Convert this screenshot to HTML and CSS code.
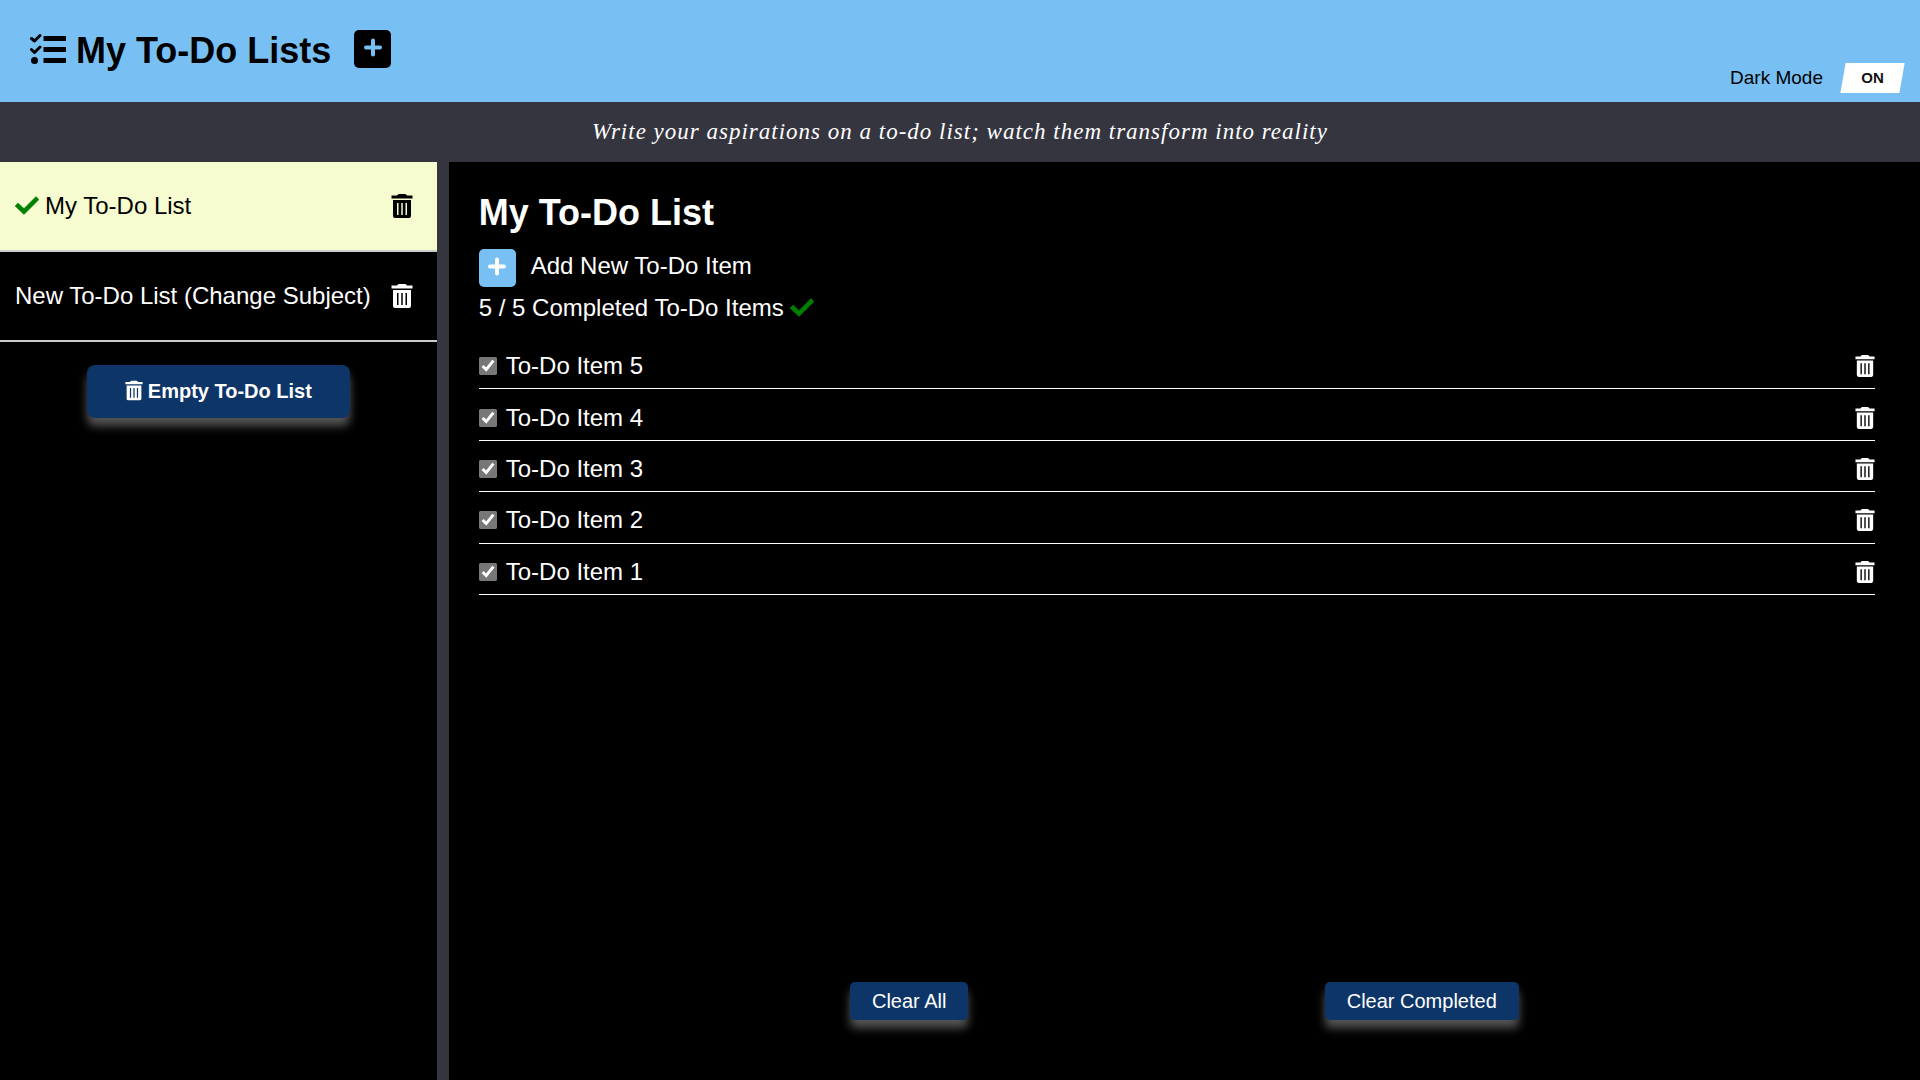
FILE: index.html
```html
<!DOCTYPE html>
<html lang="en">
<head>
<meta charset="utf-8">
<title>My To-Do Lists</title>
<link rel="stylesheet" href="styles.css">
</head>
<body>
<svg class="symbols" aria-hidden="true">
  <symbol id="trash" viewBox="0 0 22 24">
    <path d="M6 1.500 7.500 0h7L16 1.500h5.500V4.500H0.500V1.500zM2 6h18v16a2 2 0 0 1-2 2H4A2 2 0 0 1 2 22zM6 9v12h1.500V9zM10.250 9v12h1.500V9zM14.500 9v12h1.500V9z" fill="currentColor" fill-rule="evenodd"/>
  </symbol>
  <symbol id="check" viewBox="0 0 24 24">
    <path d="M0 12 3 9 9 14.500 21 2.500 24 5.500 9 20.500z" fill="currentColor" stroke="currentColor" stroke-width="0.500" stroke-linejoin="round"/>
  </symbol>
  <symbol id="plus" viewBox="0 0 20 20">
    <path d="M10 2.500v14M3 9.500h14" fill="none" stroke="currentColor" stroke-width="4" stroke-linecap="round"/>
  </symbol>
</svg>

<header class="header">
  <div class="brand">
    <svg class="icon-tasks" viewBox="0 0 36 32" aria-hidden="true">
      <path d="M1.500 5.500 4.500 8 10 2.500M1.500 16.500 4.500 19.500 10 14" fill="none" stroke="currentColor" stroke-width="3" stroke-linecap="round" stroke-linejoin="round"/>
      <circle cx="4.500" cy="27.500" r="3.500"/>
      <path d="M13.500 3h22.500v5H13.500zM13.500 14h22.500v5H13.500zM13.500 25h22.500v5H13.500z"/>
    </svg>
    <h1 class="title">My To-Do Lists</h1>
    <button class="add-button add-list" aria-label="Add list"><svg class="icon-plus"><use href="#plus"/></svg></button>
  </div>
  <div class="mode">
    <span id="mode-label">Dark Mode</span>
    <button class="toggle" aria-labelledby="mode-label"><span class="toggle-text">ON</span></button>
  </div>
</header>

<p class="quote">Write your aspirations on a to-do list; watch them transform into reality</p>

<div class="layout">
  <aside class="sidebar">
    <ul class="lists">
      <li class="list-row selected">
        <span class="list-name"><svg class="icon-check"><use href="#check"/></svg>My To-Do List</span>
        <button class="delete" aria-label="Delete list"><svg class="icon-trash"><use href="#trash"/></svg></button>
      </li>
      <li class="list-row">
        <span class="list-name">New To-Do List (Change Subject)</span>
        <button class="delete" aria-label="Delete list"><svg class="icon-trash"><use href="#trash"/></svg></button>
      </li>
    </ul>
    <button class="action empty"><svg class="icon-trash small"><use href="#trash"/></svg>Empty To-Do List</button>
  </aside>

  <main class="content">
    <h2 class="title">My To-Do List</h2>
    <div class="add-item">
      <button class="add-button" id="add-item" aria-label="Add item"><svg class="icon-plus"><use href="#plus"/></svg></button>
      <label class="add-label" for="add-item">Add New To-Do Item</label>
    </div>
    <p class="progress">5 / 5 Completed To-Do Items<svg class="icon-check"><use href="#check"/></svg></p>
    <ul class="items">
      <li class="item"><label class="item-label"><input class="tick" type="checkbox" checked>To-Do Item 5</label><button class="delete" aria-label="Delete item"><svg class="icon-trash medium"><use href="#trash"/></svg></button></li>
      <li class="item"><label class="item-label"><input class="tick" type="checkbox" checked>To-Do Item 4</label><button class="delete" aria-label="Delete item"><svg class="icon-trash medium"><use href="#trash"/></svg></button></li>
      <li class="item"><label class="item-label"><input class="tick" type="checkbox" checked>To-Do Item 3</label><button class="delete" aria-label="Delete item"><svg class="icon-trash medium"><use href="#trash"/></svg></button></li>
      <li class="item"><label class="item-label"><input class="tick" type="checkbox" checked>To-Do Item 2</label><button class="delete" aria-label="Delete item"><svg class="icon-trash medium"><use href="#trash"/></svg></button></li>
      <li class="item"><label class="item-label"><input class="tick" type="checkbox" checked>To-Do Item 1</label><button class="delete" aria-label="Delete item"><svg class="icon-trash medium"><use href="#trash"/></svg></button></li>
    </ul>
    <div class="actions">
      <button class="action">Clear All</button>
      <button class="action">Clear Completed</button>
    </div>
  </main>
</div>
</body>
</html>
```
FILE: styles.css
```css
* { box-sizing: border-box; margin: 0; padding: 0; }

body {
  display: flex;
  flex-direction: column;
  min-height: 100vh;
  background: #000;
  color: #fff;
  font-family: "Liberation Sans", Arial, sans-serif;
  font-size: 24px;
  line-height: 28px;
}

ul { list-style: none; }
button { border: 0; font: inherit; color: inherit; background: none; cursor: pointer; }
svg { display: block; flex: none; }
.symbols { position: absolute; width: 0; height: 0; }

.header {
  display: flex;
  justify-content: space-between;
  padding: 0 18px 0 30px;
  height: 102px;
  background: #78c0f4;
  color: #000;
}
.brand { display: flex; align-items: center; }
.title { font-size: 36px; line-height: 42px; }
.icon-tasks { width: 36px; height: 32px; margin: 0 10px 4px 0; fill: currentColor; }

.add-button {
  display: flex;
  justify-content: center;
  width: 37px;
  height: 38px;
  padding-top: 8px;
  border-radius: 5px;
  background: #78c0f4;
  color: #fff;
}
.add-list { margin: 0 0 4px 23px; background: #000; color: #78c0f4; }
.icon-plus { width: 20px; height: 20px; }

.mode {
  display: flex;
  align-items: center;
  align-self: flex-end;
  gap: 20px;
  padding-bottom: 9px;
  font-size: 19px;
  line-height: 30px;
}
.toggle {
  width: 59px;
  height: 30px;
  background: #fff;
  color: #111;
  font-size: 15px;
  font-weight: bold;
  line-height: 28px;
  transform: skew(-10deg);
}
.toggle-text { display: block; transform: skew(10deg); }

.quote {
  height: 60px;
  background: #35353f;
  font-family: "Liberation Serif", "Times New Roman", serif;
  font-size: 23px;
  font-style: italic;
  letter-spacing: 1px;
  line-height: 60px;
  text-align: center;
}

.layout { display: flex; flex: 1; }
.sidebar {
  display: flex;
  flex-direction: column;
  align-items: center;
  border-right: 12px solid #35353f;
}
.lists { width: 100%; }
.list-row {
  display: flex;
  align-items: center;
  justify-content: space-between;
  gap: 20px;
  height: 90px;
  padding: 0 24px 0 15px;
  border-bottom: 2px solid #ccc;
}
.selected { background: #f7fcd0; color: #000; }
.list-name { display: flex; align-items: center; gap: 6px; }
.icon-check { width: 24px; height: 24px; color: #008000; }
.icon-trash { width: 22px; height: 24px; }
.icon-trash.medium { width: 20px; height: 22px; }
.icon-trash.small { width: 18px; height: 21px; }

.action {
  height: 38px;
  padding: 0 22px;
  border-radius: 5px;
  background: #0d3568;
  box-shadow: 0 8px 10px #555;
  font-size: 20px;
}
.empty {
  display: flex;
  align-items: center;
  gap: 5px;
  height: 53px;
  margin-top: 23px;
  padding: 0 38px 2px;
  border-radius: 8px;
  font-weight: bold;
}

.content {
  display: flex;
  flex: 1;
  flex-direction: column;
  padding: 30px 45px 60px 30px;
}
.add-item { display: flex; gap: 15px; margin-top: 15px; }
.add-label { line-height: 34px; }
.progress { display: flex; align-items: center; gap: 6px; margin-top: 7px; }
.items { display: grid; grid-auto-rows: 1fr; min-height: 257px; margin-top: 16px; }
.item {
  display: flex;
  align-items: center;
  justify-content: space-between;
  padding-top: 6px;
  border-bottom: 1px solid #fff;
}
.item-label { display: flex; align-items: center; gap: 9px; }
.tick { width: 18px; height: 18px; accent-color: #777; }
.actions {
  display: flex;
  justify-content: space-evenly;
  margin-top: auto;
  padding-left: 15px;
}
```
